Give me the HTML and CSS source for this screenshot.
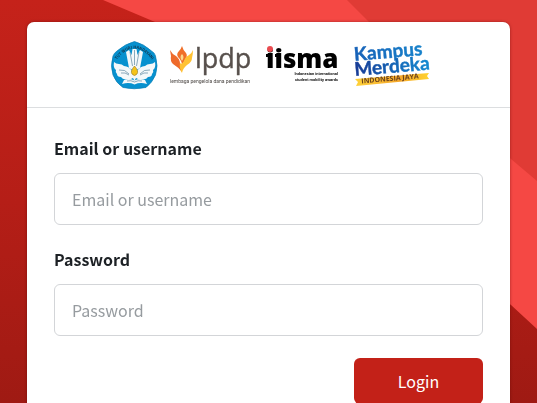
FILE: index.html
```html
<!DOCTYPE html>
<html lang="en">
<head>
<meta charset="utf-8">
<meta name="viewport" content="width=device-width, initial-scale=1">
<title>Login</title>
<link rel="stylesheet" href="styles.css">
</head>
<body>
<svg class="backdrop" viewBox="0 0 537 403" preserveAspectRatio="none" aria-hidden="true">
  <defs>
    <linearGradient id="deep" x1="0" y1="0" x2="0" y2="1">
      <stop offset="0" stop-color="#c5221a"/>
      <stop offset=".5" stop-color="#b51e17"/>
      <stop offset="1" stop-color="#9f1a13"/>
    </linearGradient>
  </defs>
  <path fill="url(#deep)" d="M0 0h537v403H0z"/>
  <path fill="#f54844" d="M103 0L155 22L511 305L537 329V0z"/>
  <path fill="#e03b35" d="M347 0L369 22L511 159L537 181V0z"/>
</svg>
<main class="page">
  <section class="card">
    <header class="logos">
      <svg class="logo" width="51" height="48" viewBox="0 0 51 48" role="img" aria-label="Tut Wuri Handayani">
        <defs><path id="arc" d="M9 20Q27 -5 46 20"/></defs>
        <path fill="#0791cf" stroke="#087db5" stroke-width=".7" d="M27.500 .5Q37 3 44.500 10Q48 12 48.500 15Q51.500 25 48.500 34Q45 42 39 46.500Q27 49 16 46.500Q9 42 6 34Q3 25 6 15Q7 12 10 10Q18 3 27.500 .5z"/>
        <text class="motto"><textPath href="#arc" startOffset="50%">TUT WURI HANDAYANI</textPath></text>
        <g fill="#f4f8fa">
          <path d="M27.500 30L22 27L19 11L22 9L24.500 14L25.500 8H29.500L30.500 14L33 9L36 11L33 27z"/>
          <path d="M26 31Q22 25 17 25Q15 23 12 23Q9 23 7 21Q6 27 9 29Q8 31 10 33Q10 36 14 36Q16 39 20 38Q23 39 26 37L27.500 40L29 37Q32 39 35 38Q39 39 41 36Q45 36 45 33Q47 31 46 29Q49 27 48 21Q46 23 43 23Q40 23 38 25Q33 25 29 31z"/>
          <path d="M17 39Q22 37 27.500 39.500Q33 37 38 39L40 43Q33 41 27.500 43.500Q22 41 15 43z"/>
        </g>
        <path fill="none" stroke="#5b87a0" stroke-width=".7" d="M23 11L25.500 25M27.500 9V24M32 11L29.500 25M12 29Q18 28 22 33M14 32Q18 31 22 34M43 29Q37 28 33 33M41 32Q37 31 33 34M20 40Q24 39 27.500 41Q31 39 35 40"/>
        <path fill="#f4c31b" stroke="#927727" stroke-width=".6" d="M27.500 25Q32 30 30 33Q27.500 36 25 33Q23 30 27.500 25z"/>
      </svg>
      <svg class="logo" width="83" height="48" viewBox="0 0 83 48" role="img" aria-label="LPDP">
        <path fill="#ee6a2b" d="M0 9Q2 13 6 15Q10 18 10 23L12 31Q8 26 3 23Q0 20 1 15z"/>
        <path fill="#f0702a" d="M12 5Q13 9 16 12Q18 15 15 19L12 24Q12 20 8 16Q6 13 9 10Q11 8 12 5z"/>
        <path fill="#ffc233" d="M23 9Q23 13 22 17Q22 21 17 24Q13 27 12 32Q9 27 10 22Q12 24 14 20Q15 16 19 14Q22 12 23 9z"/>
        <path fill="#fbd98c" d="M12 13Q9 16 12 20Q15 16 12 13z"/>
        <text class="lpdp" x="25" y="27">lpdp</text>
        <text class="lpdp-tagline" x="0" y="42">lembaga pengelola dana pendidikan</text>
      </svg>
      <svg class="logo" width="75" height="48" viewBox="0 0 75 48" role="img" aria-label="IISMA">
        <text class="iisma" x="1" y="27">iisma</text>
        <path fill="#000" d="M1 13h5v3H1zM10 13h4v3h-4z"/>
        <circle fill="#e94b50" cx="5" cy="8" r="3"/>
        <text class="iisma-tagline" x="73" y="34">Indonesian international</text>
        <text class="iisma-tagline" x="73" y="40">student mobility awards</text>
      </svg>
      <svg class="logo" width="78" height="48" viewBox="0 0 78 48" role="img" aria-label="Kampus Merdeka Indonesia Jaya">
        <defs>
          <linearGradient id="sky"><stop offset="0" stop-color="#1862b8"/><stop offset="1" stop-color="#1782cb"/></linearGradient>
          <linearGradient id="sea"><stop offset="0" stop-color="#173a95"/><stop offset="1" stop-color="#148bd2"/></linearGradient>
          <linearGradient id="gold"><stop offset="0" stop-color="#ffd23a"/><stop offset=".6" stop-color="#f5a72b"/><stop offset="1" stop-color="#ffd22f"/></linearGradient>
        </defs>
        <path fill="url(#gold)" d="M3 38L77 32L75 35L77 38L4 45L6 41z"/>
        <g transform="rotate(-5 3 36)">
          <text class="kampus" fill="url(#sky)" stroke="url(#sky)" x="4" y="20">Kampus</text>
          <text class="kampus" fill="url(#sea)" stroke="url(#sea)" x="3" y="35">Merdeka</text>
          <text class="jaya" x="9" y="43">INDONESIA JAYA</text>
        </g>
      </svg>
    </header>
    <form class="form">
      <div class="field">
        <label for="username">Email or username</label>
        <input id="username" type="text" placeholder="Email or username">
      </div>
      <div class="field">
        <label for="password">Password</label>
        <input id="password" type="password" placeholder="Password">
      </div>
      <button class="submit" type="submit">Login</button>
    </form>
  </section>
</main>
</body>
</html>
```
FILE: styles.css
```css
* {
  box-sizing: border-box;
}

body {
  margin: 0;
  background: #9f1a13;
  color: #1d2125;
  font-family: "Noto Sans CJK SC", "Noto Sans", sans-serif;
  font-size: 16px;
  line-height: 24px;
}

.backdrop {
  position: fixed;
  inset: 0;
  z-index: -1;
  width: 100%;
  height: 100%;
}

.page {
  padding: 22px 27px 0;
}

.card {
  background: #fff;
  border-radius: 7px;
  box-shadow: 0 0 3px rgba(80, 0, 0, 0.5);
}

.logos {
  display: flex;
  justify-content: center;
  gap: 12px;
  padding: 19px 0 18px;
  border-bottom: 1px solid #dcdee0;
}

.logo {
  flex: none;
  overflow: visible;
}

.motto {
  fill: #12374f;
  font-size: 4px;
  font-weight: 700;
  text-anchor: middle;
}

.lpdp {
  fill: #57504c;
  stroke: #57504c;
  stroke-width: 0.4px;
  font-family: "Open Sans", sans-serif;
  font-size: 27px;
}

.lpdp-tagline {
  fill: #4c4744;
  font-family: Roboto, sans-serif;
  font-size: 5px;
}

.iisma {
  fill: #000;
  font-family: "Open Sans", sans-serif;
  font-size: 26px;
  font-weight: 800;
}

.iisma-tagline {
  fill: #111;
  font-family: Roboto, sans-serif;
  font-size: 4px;
  font-weight: 700;
  text-anchor: end;
}

.kampus {
  stroke-width: 0.4px;
  font-family: Lato, sans-serif;
  font-size: 19px;
  font-weight: 700;
}

.jaya {
  fill: #6b421c;
  font-family: "Open Sans", sans-serif;
  font-size: 7px;
  font-weight: 700;
}

.form {
  display: flex;
  flex-direction: column;
  gap: 22px;
  padding: 28px 27px 27px;
}

.field {
  display: flex;
  flex-direction: column;
  gap: 13px;
}

.field label {
  font-weight: 700;
}

.field input {
  width: 100%;
  height: 52px;
  padding: 0 17px;
  border: 1px solid #d3d5d8;
  border-radius: 6px;
  background: #fff;
  color: inherit;
  font: inherit;
}

.field input::placeholder {
  color: #969b9f;
  opacity: 1;
}

.submit {
  align-self: flex-end;
  width: 30%;
  min-width: 129px;
  height: 46px;
  padding: 0;
  border: 0;
  border-radius: 6px;
  background: #c32118;
  color: #fff;
  font: inherit;
}
```
